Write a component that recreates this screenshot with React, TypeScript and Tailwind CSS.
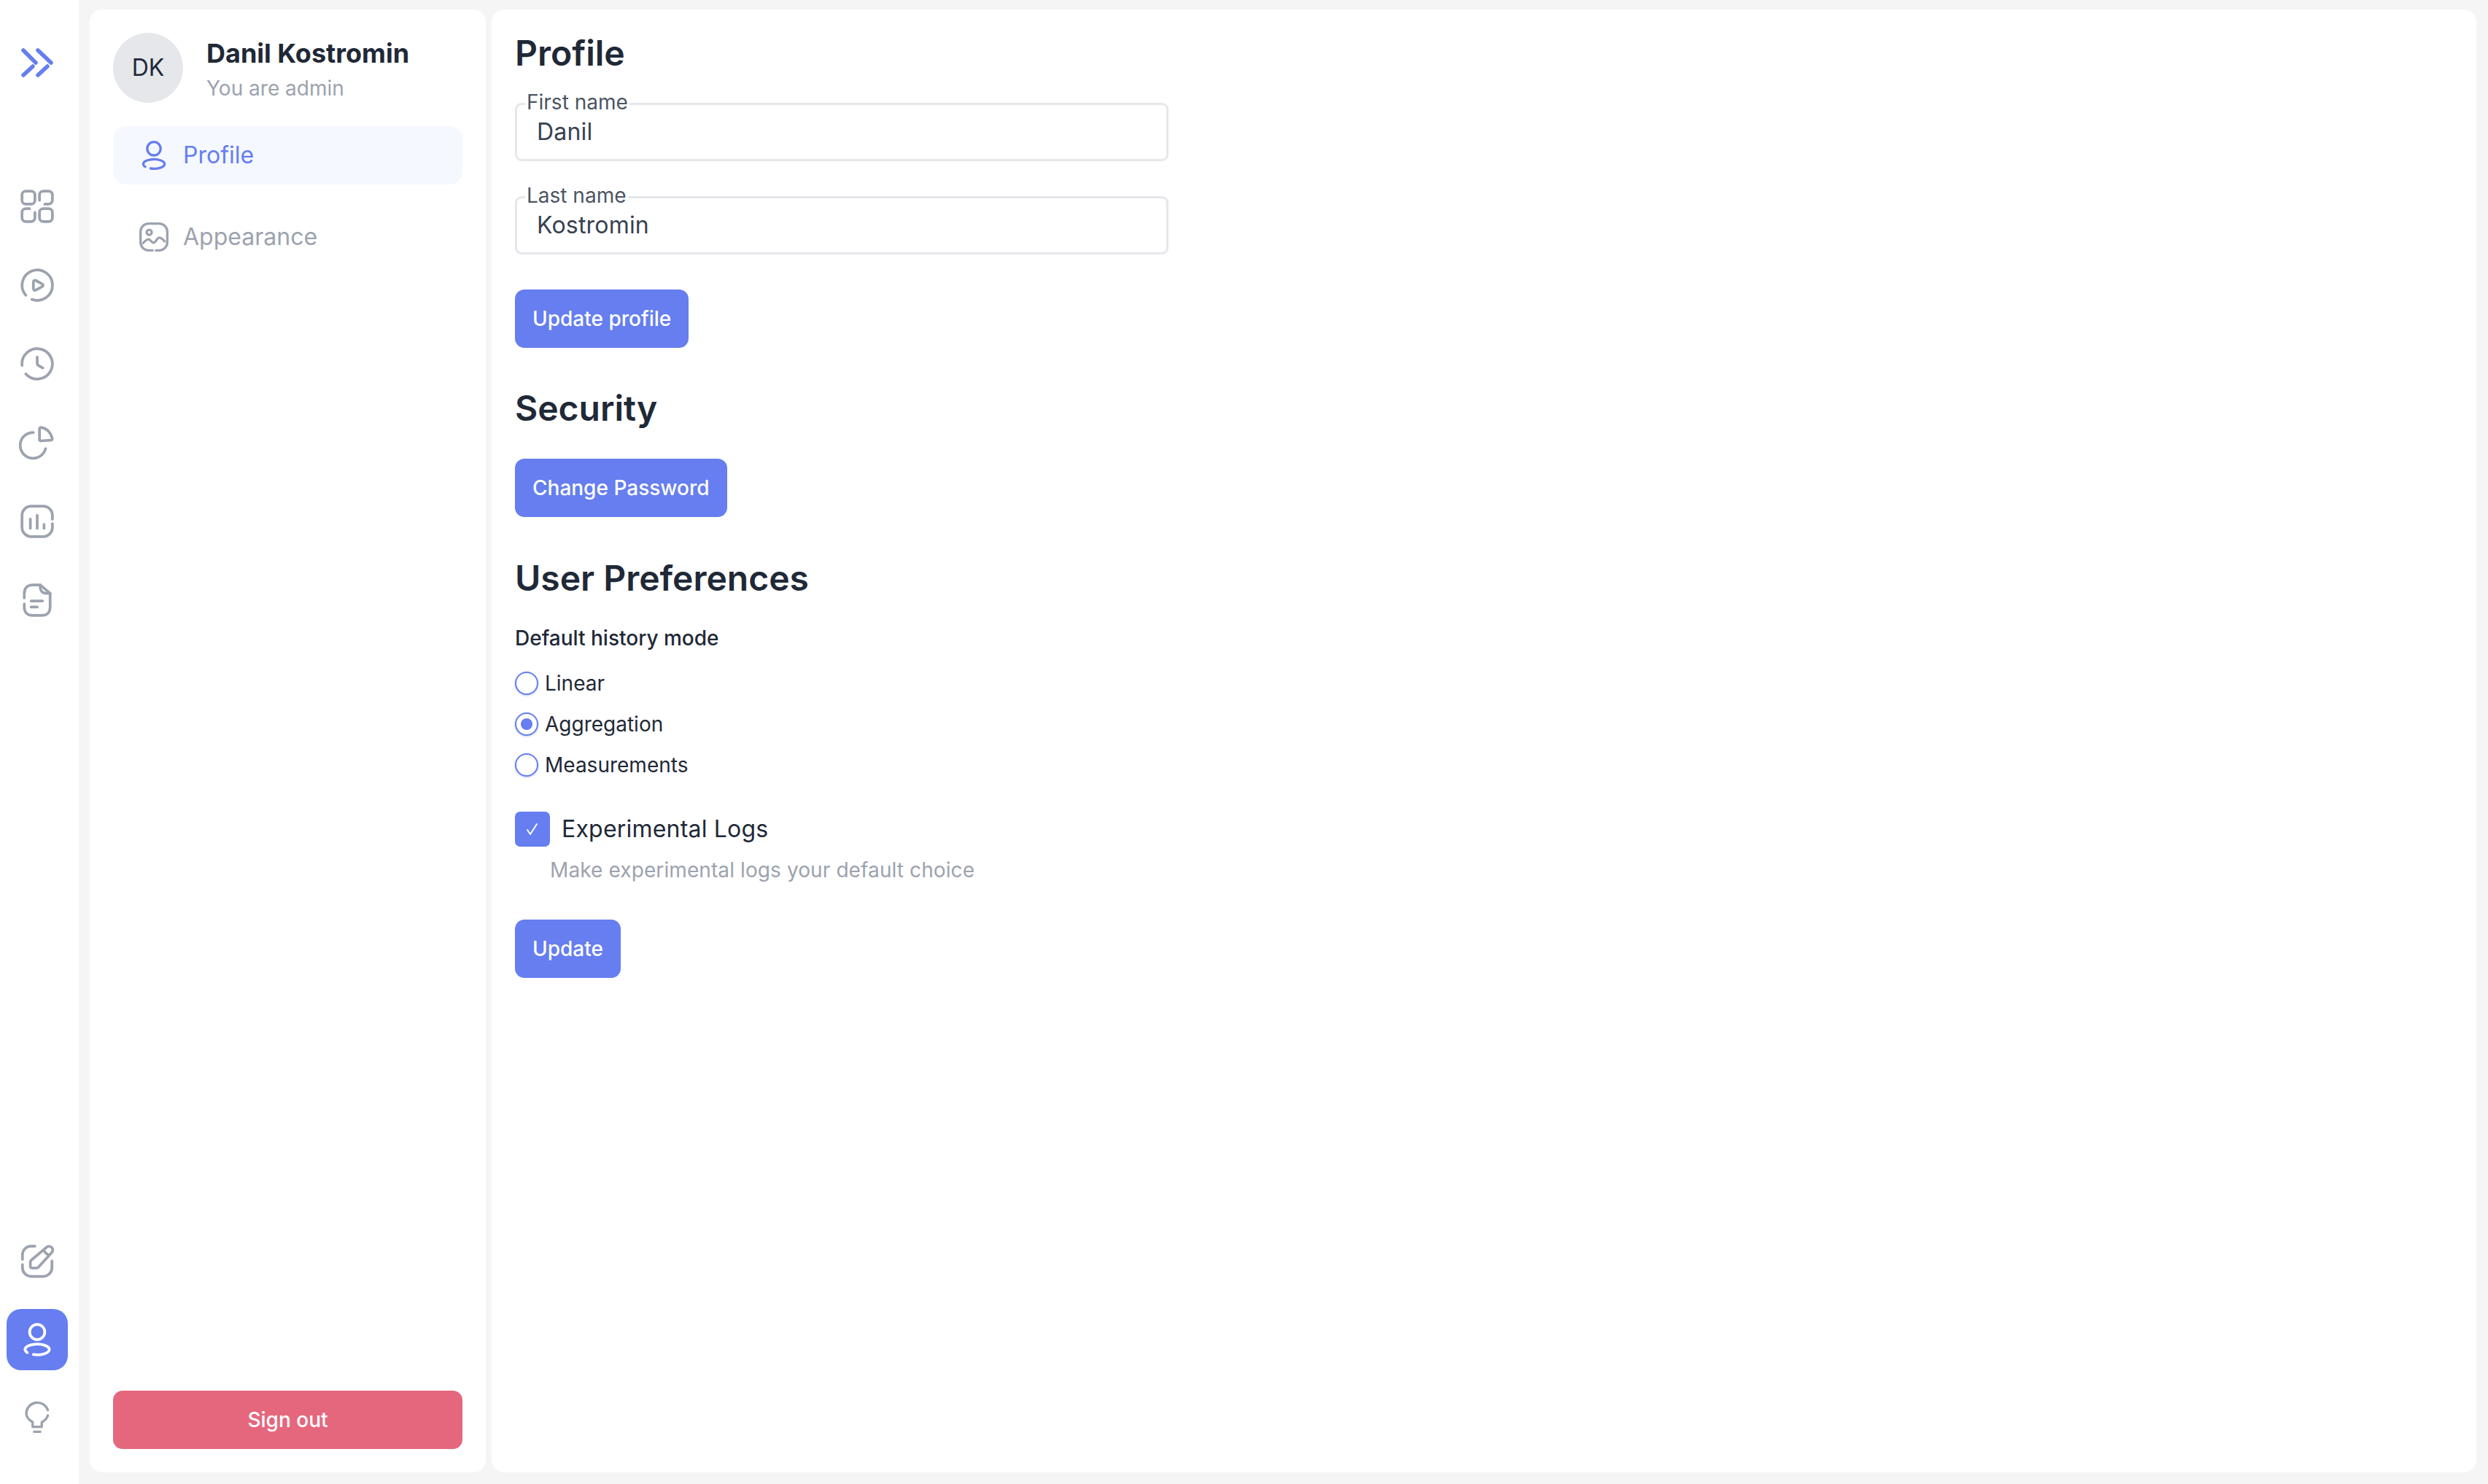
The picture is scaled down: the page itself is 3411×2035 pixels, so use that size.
import React from "react";

const S = ({ size = 50, children, sw = 1.8 }: { size?: number; children: React.ReactNode; sw?: number }) => (
  <svg width={size} height={size} viewBox="0 0 24 24" fill="none" stroke="currentColor" strokeWidth={sw} strokeLinecap="round" strokeLinejoin="round">
    {children}
  </svg>
);

const IconChevrons = () => (
  <svg width="45" height="40" viewBox="0 0 45 40" fill="none" stroke="currentColor" strokeWidth={5.5} strokeLinecap="round" className="text-[#667eef]">
    <path d="M3 3 20 20M16 25 3 37M23 3 41 20M36 25 23 37" />
  </svg>
);
const IconGrid = () => (
  <S>
    <rect x="2" y="2" width="8.5" height="8.5" rx="2.5" />
    <rect x="13.5" y="13.5" width="8.5" height="8.5" rx="2.5" />
    <path d="M13.5 8V4.5A2.5 2.5 0 0 1 16 2h3.5A2.5 2.5 0 0 1 22 4.500V8a2.500 2.500 0 0 1-2.500 2.500H17" />
    <path d="M10.500 16v3.500A2.500 2.500 0 0 1 8 22H4.500A2.500 2.500 0 0 1 2 19.500V16a2.500 2.500 0 0 1 2.500-2.500H7" />
  </S>
);
const IconPlay = () => (
  <S>
    <path d="M4.500 18.600A10 10 0 1 1 8.500 21.400" />
    <path d="M9.500 10c0-1 .8-1.500 1.700-1l4 2.200c.9.500.9 1.300 0 1.800l-4 2.200c-.9.500-1.700 0-1.700-1z" />
  </S>
);
const IconClock = () => (
  <S>
    <path d="M4.500 18.600A10 10 0 1 0 2.050 13" />
    <path d="M12 7.500v4.200c0 .5.300 1 .800 1.300l2.900 1.700" />
  </S>
);
const IconPie = () => (
  <S>
    <path d="M9.500 5.300A8.500 8.500 0 1 0 17.500 16" />
    <path d="M13.500 3c0-.7.500-1.100 1.100-1 3.500.5 6.300 3.300 7.300 7 .2.800-.3 1.400-1 1.400l-6.200.4c-.7 0-1.200-.4-1.200-1z" />
  </S>
);
const IconChart = () => (
  <S>
    <path d="M22 10.500V8a6 6 0 0 0-6-6H8a6 6 0 0 0-6 6v8a6 6 0 0 0 6 6h8a6 6 0 0 0 6-6v-2.500" />
    <path d="M7.500 10.500v6M12 8v8.500M16.500 14v2.500" />
  </S>
);
const IconNote = () => (
  <S>
    <path d="M3.500 10.500V7.500c0-3.300 2-5.500 5.500-5.500h5l6.500 5.500v9c0 3.500-2 5.500-5.500 5.500H9c-3.500 0-5.500-2-5.500-5.500v-2" />
    <path d="M14 2v1.500C14 6 15.500 7.500 18 7.500h2.500" />
    <path d="M8 12.500h7.500M8 16.500h4" />
  </S>
);
const IconEdit = () => (
  <S>
    <path d="M10.500 2.300H8A5.700 5.700 0 0 0 2.300 8v3" />
    <path d="M2.300 14.500v2A5.700 5.700 0 0 0 8 22.200h8a5.700 5.700 0 0 0 5.700-5.700V12" />
    <path d="M18 3.200c1-1 2.500-1 3.500 0 1 1 .9 2.400 0 3.400L13 16c-.4.400-1 .700-1.500.700H8.500c-.6 0-1-.4-1-1v-2.700c0-.6.200-1.100.6-1.500z" />
    <path d="M16.500 5c.5 1.500 1.500 2.500 3 3" />
  </S>
);
const IconUser = ({ size = 50 }: { size?: number }) => (
  <S size={size}>
    <circle cx="12" cy="7" r="5" />
    <path d="M5.500 20.540A8 3.500 0 1 1 9.500 21.820" />
  </S>
);
const IconImage = () => (
  <S size={44}>
    <path d="M11 22H8a6 6 0 0 1-6-6V8a6 6 0 0 1 6-6h8a6 6 0 0 1 6 6v8a6 6 0 0 1-6 6h-2.500" />
    <circle cx="8.500" cy="8.500" r="1.900" />
    <path d="M4 16.500c1.500-1.700 3-3 4.300-2.700 1.500.3 2 2.500 3.400 2.500 1.800 0 2.500-3.800 4.300-3.800 1.300 0 2.700 1.200 4 2.800" />
  </S>
);
const IconBulb = () => (
  <S sw={1.6}>
    <path d="M19 7.500A7.300 7.300 0 0 0 4.800 9.500c0 2.500 1.700 4.500 4.200 6v3h6v-3c2-1 3.500-2.500 4-4.500" />
    <path d="M10 21.800h4" />
  </S>
);

const Field = ({ label, value, className = "" }: { label: string; value: string; className?: string }) => (
  <div className={`relative h-[80px] w-[896px] rounded-[9px] border-[3px] border-[#e5e7eb] pl-[27px] pt-[12px] text-[32px] leading-[50px] tracking-[0.2px] text-[#374151] ${className}`}>
    <span className="absolute -top-[24px] left-[11px] bg-white px-[2px] text-[28px] leading-[40px] tracking-normal text-[#4b5563]">{label}</span>
    {value}
  </div>
);

const Btn = ({ children, className = "" }: { children: React.ReactNode; className?: string }) => (
  <button className={`flex h-[80px] items-center justify-center rounded-[13px] bg-[#667eef] px-[24px] text-[28px] font-medium text-white ${className}`}>{children}</button>
);

const Heading = ({ children, className = "" }: { children: React.ReactNode; className?: string }) => (
  <h2 className={`text-[48px] font-semibold leading-[70px] text-[#1f2937] ${className}`}>{children}</h2>
);

const Radio = ({ label, checked = false }: { label: string; checked?: boolean }) => (
  <div className="flex h-[32px] items-center gap-[9px] text-[28px] text-[#1f2937]">
    <span className="flex h-[32px] w-[32px] items-center justify-center rounded-full border-[2px] border-[#667eef] bg-white shadow-[0_1px_3px_rgba(102,126,239,0.4)]">
      {checked && <span className="h-[16px] w-[16px] rounded-full bg-[#667eef]" />}
    </span>
    {label}
  </div>
);

export default function App() {
  return (
    <div className="flex h-[2035px] w-[3411px] overflow-hidden bg-[#f5f5f5] font-['Inter',sans-serif]">
      <aside className="flex w-[108px] flex-col items-center bg-white pb-[67px] pr-[6px] pt-[66px] text-[#9ca3af]">
        <IconChevrons />
        <div className="mt-[152px] flex flex-col items-center gap-[58px]">
          <IconGrid />
          <IconPlay />
          <IconClock />
          <IconPie />
          <IconChart />
          <IconNote />
        </div>
        <div className="mt-auto flex flex-col items-center">
          <IconEdit />
          <div className="mt-[41px] flex h-[84px] w-[84px] items-center justify-center rounded-[20px] bg-[#667eef] text-white">
            <IconUser />
          </div>
          <div className="mt-[39px]">
            <IconBulb />
          </div>
        </div>
      </aside>

      <div className="ml-[15px] mt-[13px] flex h-[2006px] w-[543px] flex-col rounded-[17px] bg-white p-[32px]">
        <div className="flex items-start gap-[32px]">
          <div className="flex h-[96px] w-[96px] items-center justify-center rounded-full bg-[#e5e7eb] text-[32px] text-[#1f2937]">DK</div>
          <div className="pt-[3px]">
            <div className="text-[36px] font-bold leading-[50px] text-[#1f2937]">Danil Kostromin</div>
            <div className="text-[28px] leading-[46px] text-[#9ca3af]">You are admin</div>
          </div>
        </div>
        <div className="mt-[29px] flex h-[80px] items-center gap-[18px] rounded-[17px] bg-[#f5f8ff] pl-[34px] text-[32px] text-[#667eef]">
          <IconUser size={44} />
          Profile
        </div>
        <div className="mt-[32px] flex h-[80px] items-center gap-[18px] pl-[34px] text-[32px] text-[#9ca3af]">
          <IconImage />
          Appearance
        </div>
        <button className="mt-auto h-[80px] rounded-[13px] bg-[#e5677d] text-[28px] font-medium text-white">Sign out</button>
      </div>

      <main className="ml-[8px] mt-[13px] h-[2006px] w-[2721px] rounded-[17px] bg-white pl-[32px] pt-[25px]">
        <Heading>Profile</Heading>
        <Field label="First name" value="Danil" className="mt-[33px]" />
        <Field label="Last name" value="Kostromin" className="mt-[48px]" />
        <Btn className="mt-[48px]">Update profile</Btn>
        <Heading className="mt-[48px]">Security</Heading>
        <Btn className="mt-[34px]">Change Password</Btn>
        <Heading className="mt-[49px]">User Preferences</Heading>
        <div className="mt-[27px] text-[28px] font-medium leading-[40px] text-[#1f2937]">Default history mode</div>
        <div className="mt-[26px] flex flex-col gap-[24px]">
          <Radio label="Linear" />
          <Radio label="Aggregation" checked />
          <Radio label="Measurements" />
        </div>
        <div className="mt-[48px] flex items-center gap-[16px]">
          <span className="flex h-[48px] w-[48px] items-center justify-center rounded-[7px] bg-[#667eef] text-white">
            <svg width="18" height="18" viewBox="0 0 18 18" fill="none" stroke="currentColor" strokeWidth={2} strokeLinecap="round" strokeLinejoin="round">
              <path d="M2 10l4 6L15 2" />
            </svg>
          </span>
          <span className="text-[32px] leading-[48px] tracking-[0.2px] text-[#1f2937]">Experimental Logs</span>
        </div>
        <div className="ml-[48px] mt-[12px] text-[28px] leading-[40px] tracking-[0.1px] text-[#9ca3af]">Make experimental logs your default choice</div>
        <Btn className="mt-[48px]">Update</Btn>
      </main>
    </div>
  );
}
